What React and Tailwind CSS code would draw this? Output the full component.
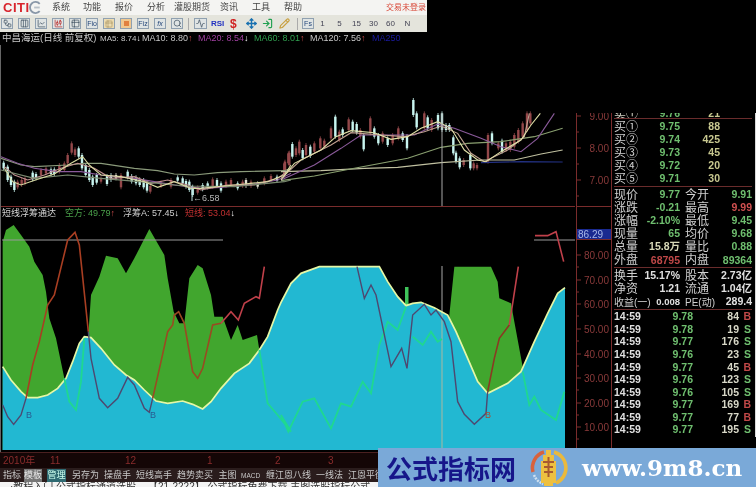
import { ChartCandlestick, ChartLine, Columns3, LogIn, Move, Pencil, Search, Table2, Workflow, Activity } from 'lucide-react';

const up = (pts, dx = 0) => pts.map(([x, y]) => `${dx + x / 3},${100 + y / 3}`).join(' ');
const L = (pts) => pts.map(([x, y]) => [x / 3, 215 + y / 3]);
const R = (pts) => pts.map(([x, y]) => [280 + x / 3, 215 + y / 3]);
const str = (pts) => pts.map((p) => p.join(',')).join(' ');

const candlesLeft = [[8,188,205,'d'],[20,200,240,'d'],[30,230,255,'d'],[40,245,270,'d'],[50,245,262,'u'],[62,240,255,'u'],[72,235,250,'u'],[95,218,238,'d'],[105,222,235,'d'],[120,210,225,'u'],[135,205,220,'u'],[150,208,222,'d'],[160,208,222,'d'],[175,195,215,'u'],[190,190,210,'u'],[200,165,190,'u'],[212,130,158,'u'],[222,148,165,'u'],[233,145,170,'d'],[243,165,205,'d'],[254,195,225,'d'],[265,210,240,'d'],[275,230,255,'d'],[287,225,248,'d'],[300,235,245,'u'],[318,228,252,'d'],[330,225,240,'d'],[345,225,235,'w'],[360,225,262,'u'],[380,215,232,'d'],[392,228,245,'d'],[405,232,250,'d'],[416,238,255,'d'],[428,240,262,'d'],[438,250,272,'d'],[448,258,275,'u'],[480,248,258,'u'],[510,240,260,'u'],[530,232,242,'d'],[545,235,250,'d'],[555,243,260,'d'],[565,245,270,'d'],[575,260,285,'d'],[590,262,278,'u'],[605,255,268,'d'],[620,250,262,'d'],[635,238,260,'u'],[648,240,258,'d'],[660,250,272,'d'],[675,245,258,'u'],[690,240,255,'u'],[710,250,265,'d'],[725,245,258,'u'],[735,240,258,'w'],[750,245,258,'u'],[770,250,260,'w'],[790,235,250,'u'],[810,228,240,'u'],[828,230,242,'d'],[850,190,230,'u'],[865,158,195,'u']];
const candlesRight = [[12,185,215,'u'],[22,160,190,'u'],[34,132,170,'d'],[45,145,165,'u'],[55,125,160,'u'],[65,150,175,'d'],[75,135,165,'u'],[88,140,168,'d'],[100,130,155,'u'],[118,115,145,'u'],[130,122,140,'u'],[150,85,115,'u'],[163,50,110,'d'],[175,95,120,'u'],[185,88,105,'d'],[203,58,90,'u'],[215,65,90,'d'],[227,72,98,'d'],[238,90,110,'u'],[248,105,148,'d'],[268,55,100,'u'],[280,85,110,'d'],[292,105,130,'d'],[305,100,125,'u'],[320,115,135,'d'],[335,105,130,'u'],[352,85,115,'u'],[365,100,120,'d'],[378,108,145,'d'],[397,0,45,'d'],[407,40,82,'d'],[430,40,85,'u'],[440,52,85,'d'],[452,60,90,'u'],[471,45,85,'d'],[483,40,90,'d'],[495,75,90,'d'],[505,75,90,'d'],[517,112,160,'d'],[525,158,185,'d'],[536,175,202,'d'],[548,180,195,'u'],[568,165,205,'d'],[578,190,205,'u'],[588,195,205,'u'],[621,105,185,'u'],[633,100,130,'d'],[652,130,145,'u'],[663,122,155,'d'],[675,130,150,'u'],[688,125,150,'u'],[700,105,140,'u'],[712,90,125,'u'],[725,70,110,'u'],[738,40,90,'u'],[748,40,70,'u']];

const maLeft = [
  ['#8a9a7a', [[0,175],[60,195],[100,200],[200,195],[250,190],[300,190],[400,205],[470,212],[520,222],[580,225],[650,218],[720,215],[850,212],[870,205]]],
  ['#8a5a9a', [[0,170],[50,190],[100,205],[170,215],[240,215],[300,225],[400,235],[460,245],[520,255],[600,265],[660,262],[760,252],[830,240],[870,220]]],
  ['#c09090', [[10,200],[40,225],[80,240],[130,225],[180,205],[230,190],[280,205],[330,235],[400,230],[450,250],[500,240],[560,255],[600,270],[680,255],[760,255],[830,235],[870,205]]],
  ['#7a8a70', [[0,210],[100,235],[200,225],[300,235],[450,248],[550,258],[700,260],[850,245],[870,240]]],
  ['#d8d8a0', [[10,205],[35,245],[60,255],[110,238],[160,222],[210,190],[245,170],[265,195],[300,225],[360,230],[430,245],[470,262],[520,245],[570,265],[600,265],[700,255],[800,245],[850,225],[870,195]]],
];
const maRight = [
  ['#223080', [[600,188],[720,185],[845,186]]],
  ['#c0c0a0', [[0,215],[120,212],[250,205],[350,202],[480,188],[600,180],[700,180],[780,162],[845,150]]],
  ['#8aa070', [[0,242],[100,228],[220,205],[380,175],[480,142],[560,130],[660,125],[760,110],[845,85]]],
  ['#8a5a9a', [[0,240],[100,195],[180,145],[240,105],[320,105],[400,105],[470,72],[520,85],[600,115],[660,140],[720,155],[770,115],[820,40]]],
  ['#c0a090', [[0,235],[60,180],[150,135],[210,98],[300,105],[370,110],[430,95],[480,78],[530,100],[570,160],[610,185],[680,150],[730,110],[745,40]]],
  ['#e0e0a8', [[0,240],[40,190],[120,150],[165,110],[210,92],[280,98],[330,118],[380,110],[420,85],[470,65],[510,85],[550,150],[590,180],[615,185],[660,155],[720,120],[750,75],[778,40]]],
];

const curve = [
  ...L([[5,455],[30,495],[60,530],[80,548],[110,548],[140,540],[170,520],[195,490],[215,440],[235,385],[250,365],[270,368],[300,400],[340,450],[375,480],[400,495],[430,525],[465,558],[500,565],[545,558],[575,568],[605,582],[630,560],[660,520],[700,475],[745,445],[775,405],[800,365],[830,285]]),
  ...R([[0,262],[30,205],[60,175],[115,155],[295,155],[320,200],[350,245],[375,272],[395,265],[420,262],[460,278],[500,300],[525,350],[560,430],[590,500],[620,535],[680,505],[720,470],[760,380],[800,295],[830,235],[852,218]]),
];
const green1 = L([[5,80],[15,45],[38,30],[60,60],[85,95],[100,140],[125,180],[135,230],[145,310],[165,370],[190,490],[190,705],[5,705]]);
const green2 = L([[262,360],[270,240],[295,185],[315,122],[350,130],[375,175],[400,130],[445,42],[490,120],[500,190],[518,290],[535,325],[550,325],[565,190],[590,150],[605,160],[630,240],[640,305],[665,305],[690,375],[710,330],[725,375],[768,360],[775,405],[775,705],[262,705]]);
const green3 = R([[505,300],[520,155],[630,155],[650,200],[655,250],[690,265],[700,320],[725,455],[725,705],[505,705]]);

const brightLines = [
  L([[190,490],[205,560],[225,585],[240,500],[250,370]]),
  [...L([[775,405],[790,500],[800,565],[830,600],[870,650]]), ...R([[0,600],[22,650],[65,560],[100,550],[150,640],[180,565],[210,575],[245,500],[270,535],[295,390],[320,320],[350,345],[375,275]])],
  R([[395,365],[425,390],[450,350],[470,380],[483,372]]),
  R([[725,470],[745,570],[760,545],[780,585],[825,615],[850,530]]),
];
const darkLines = [
  L([[5,570],[20,605],[38,628],[60,600],[75,550]]),
  L([[262,350],[270,430],[295,550],[320,578],[350,550],[380,487],[400,510],[430,580],[445,592],[455,550]]),
  R([[228,155],[250,250],[270,210],[285,240],[330,455],[362,400],[378,460],[395,300],[430,268],[450,300],[465,285],[490,320],[510,380],[530,560],[550,598],[580,628],[615,595],[620,530]]),
];
const redLines = [
  ['#a83e22', L([[75,550],[95,450],[115,380],[140,270],[160,240],[200,75],[222,52],[235,90],[262,350]])],
  ['#9a4a22', L([[455,550],[480,440],[500,350],[515,330],[520,300],[533,290],[550,325],[575,470],[590,490],[605,460],[635,330],[660,325]])],
  ['#c0404a', L([[660,325],[690,290],[712,315],[730,265],[765,245],[775,250],[790,155]])],
  ['#8a3a22', R([[620,530],[640,430],[655,370],[685,330]])],
  ['#c0404a', R([[685,330],[712,155]])],
  ['#c0404a', R([[762,62],[780,62],[800,62],[825,50],[848,140]])],
];

const book = [['买①', '9.75', '88'], ['买②', '9.74', '425'], ['买③', '9.73', '45'], ['买④', '9.72', '20'], ['买⑤', '9.71', '30']];
const stats = [
  ['现价', '9.77', 'text-[#6fbf6f]', '今开', '9.91', 'text-[#6fbf6f]'],
  ['涨跌', '-0.21', 'text-[#6fbf6f]', '最高', '9.99', 'text-[#d05050]'],
  ['涨幅', '-2.10%', 'text-[#6fbf6f]', '最低', '9.45', 'text-[#6fbf6f]'],
  ['现量', '65', 'text-[#6fbf6f]', '均价', '9.68', 'text-[#6fbf6f]'],
  ['总量', '15.8万', 'text-[#d8d8b8]', '量比', '0.88', 'text-[#6fbf6f]'],
  ['外盘', '68795', 'text-[#c04848]', '内盘', '89364', 'text-[#6fbf6f]'],
];
const finance = [['换手', '15.17%', '股本', '2.73亿'], ['净资', '1.21', '流通', '1.04亿'], ['收益(一)', '0.008', 'PE(动)', '289.4']];
const ticks = [['9.78', '84', 'B'], ['9.78', '19', 'S'], ['9.77', '176', 'S'], ['9.76', '23', 'S'], ['9.77', '45', 'B'], ['9.76', '123', 'S'], ['9.76', '105', 'S'], ['9.77', '169', 'B'], ['9.77', '77', 'B'], ['9.77', '195', 'S']];
const tabs = [
  ['指标', 'w-[18px] ml-[3px]'], ['模板', 'w-[18px] ml-[3px] bg-[#777] text-[#e8e8e8]'], ['管理', 'w-[19px] ml-[5px] bg-[#2f6a72] text-[#cfe]'],
  ['另存为', 'w-[26px] ml-[6px]'], ['操盘手', 'w-[26px] ml-[6px]'], ['短线高手', 'w-[35px] ml-[6px]'], ['趋势卖买', 'w-[36px] ml-[6px]'],
  ['主图', 'w-[19px] ml-[5px]'], ['MACD', 'w-[19px] ml-[4px] text-[6.5px]'], ['缠江恩八线', 'w-[44px] ml-[6px]'], ['一线法', 'w-[26px] ml-[6px]'], ['江恩平衡', 'w-[34px] ml-[6px]'],
];

function Candles({ items, dx = 0 }) {
  return items.map(([x, top, bot, kind]) => {
    const cx = dx + x / 3;
    const y1 = 100 + top / 3;
    const y2 = 100 + bot / 3;
    const fill = kind === 'd' ? '#c8f5f0' : kind === 'w' ? '#e0e0d0' : '#94484a';
    return (
      <g key={`${dx}-${x}`}>
        <line x1={cx} x2={cx} y1={y1 - 2} y2={y2 + 2} stroke={fill} strokeWidth="0.8" />
        <rect x={cx - 1.2} y={y1} width="2.4" height={y2 - y1} fill={fill} />
      </g>
    );
  });
}

function ToolBox({ children, size = 'w-[12px]', tone = 'bg-[#dfe4e4] text-[#456]' }) {
  return <span className={`flex items-center justify-center ${size} h-[11px] border border-[#8fa0b0] text-[7px] leading-none ${tone}`}>{children}</span>;
}

function Toolbar() {
  const blue = 'bg-[#dfe4e4] text-[#247]';
  return (
    <div className="flex items-center h-[17px] bg-[#e4e4dc] pl-[1px] text-[#667]">
      <div className="flex items-center gap-[5px]">
        <ToolBox><Workflow size={9} /></ToolBox>
        <ToolBox><Columns3 size={9} /></ToolBox>
        <ToolBox><ChartLine size={9} /></ToolBox>
        <ToolBox tone="bg-[#dfe4e4] text-[#b33]"><ChartCandlestick size={9} /></ToolBox>
        <ToolBox><Table2 size={9} /></ToolBox>
        <ToolBox tone={blue}>Fio</ToolBox>
        <ToolBox tone="bg-[#eedcb0] text-[#a96]"><Table2 size={8} /></ToolBox>
        <ToolBox tone="bg-[#f0c890] text-[#a96]"><span className="w-[5px] h-[5px] bg-[#e08040]" /></ToolBox>
        <ToolBox tone={blue}>Fiz</ToolBox>
        <ToolBox tone={blue}><span className="italic">fx</span></ToolBox>
        <ToolBox><Search size={9} /></ToolBox>
      </div>
      <span className="w-px h-[12px] bg-[#aaa] ml-[5px] mr-[5px]" />
      <ToolBox size="w-[13px]"><Activity size={9} /></ToolBox>
      <span className="ml-[4px] w-[12px] text-[8px] font-bold text-[#2030c0]">RSI</span>
      <span className="ml-[7px] w-[8px] text-[12px] leading-none font-bold text-[#d02020]">$</span>
      <Move size={11} strokeWidth={3} className="ml-[8px] text-[#1870b0]" />
      <LogIn size={11} strokeWidth={2.5} className="ml-[5px] text-[#20a050]" />
      <Pencil size={11} strokeWidth={2.5} className="ml-[6px] text-[#c8a040]" />
      <span className="w-px h-[12px] bg-[#aaa] ml-[7px] mr-[4px]" />
      <ToolBox tone={blue}>Fs</ToolBox>
      <div className="flex items-center text-[8px] text-[#445]">
        <span className="w-[17px] text-center">1</span>
        <span className="w-[17px] text-center">5</span>
        <span className="w-[17px] text-center">15</span>
        <span className="w-[17px] text-center">30</span>
        <span className="w-[17px] text-center">60</span>
        <span className="w-[17px] text-center">N</span>
      </div>
    </div>
  );
}

function UpperChart() {
  return (
    <svg viewBox="0 45 574 161" className="block w-[574px] h-[161px]">
      <Candles items={candlesLeft} />
      <Candles items={candlesRight} dx={280} />
      {maLeft.map(([c, pts]) => <polyline key={c} points={up(pts)} fill="none" stroke={c} strokeWidth="1.1" />)}
      {maRight.map(([c, pts]) => <polyline key={c} points={up(pts, 280)} fill="none" stroke={c} strokeWidth="1.1" />)}
      <line x1="441" x2="441" y1="113" y2="206" stroke="#a8a8a8" strokeWidth="1" />
      <line x1="191" x2="191" y1="186" y2="201" stroke="#b8d8d8" strokeWidth="1" />
      <text x="192" y="201" fill="#b8b8b8" fontSize="9">←6.58</text>
    </svg>
  );
}

function LowerChart() {
  const cyanPoly = [...curve, [564, 450], [1.6, 450]];
  return (
    <svg viewBox="0 220 574 232" className="block w-[574px] h-[232px]">
      <polygon points={str(green1)} fill="#41a62e" />
      <polygon points={str(green2)} fill="#41a62e" />
      <polygon points={str(green3)} fill="#41a62e" />
      <polygon points={str(cyanPoly)} fill="#22b8d2" />
      <rect x="404" y="287" width="3.5" height="19" fill="#3fc45a" />
      <line x1="441" x2="441" y1="266" y2="312" stroke="#a8a8a8" strokeWidth="1" />
      <line x1="441" x2="441" y1="312" y2="450" stroke="#7fb8b0" strokeWidth="1.5" />
      <line x1="1" x2="222" y1="240" y2="240" stroke="#9a9a9a" strokeWidth="1" />
      <line x1="533" x2="575" y1="240" y2="240" stroke="#9a9a9a" strokeWidth="1" />
      <polyline points={str(curve)} fill="none" stroke="#e6f7a6" strokeWidth="1.7" />
      {brightLines.map((pts, i) => <polyline key={i} points={str(pts)} fill="none" stroke="#1fd890" strokeWidth="1.8" />)}
      {darkLines.map((pts, i) => <polyline key={i} points={str(pts)} fill="none" stroke="#4e4870" strokeWidth="1.4" />)}
      {redLines.map(([c, pts], i) => <polyline key={i} points={str(pts)} fill="none" stroke={c} strokeWidth="1.6" />)}
      <text x="25" y="418" fill="#2a5a90" fontSize="9">B</text>
      <text x="149" y="418" fill="#2a5a90" fontSize="9">B</text>
      <text x="484" y="418" fill="#a84a30" fontSize="9">B</text>
    </svg>
  );
}

function Axis() {
  const upper = [[9, 116], [8, 148], [7, 180]];
  const lower = [[80, 255], [70, 280], [60, 304], [50, 329], [40, 354], [30, 378], [20, 403], [10, 427]];
  return (
    <svg viewBox="574 113 37 339" className="block w-[37px] h-[339px]">
      <line x1="575.5" x2="575.5" y1="113" y2="452" stroke="#7a2c2c" />
      <line x1="610.5" x2="610.5" y1="113" y2="452" stroke="#7a2c2c" />
      <line x1="575" x2="611" y1="206.5" y2="206.5" stroke="#7a2c2c" />
      <line x1="575" x2="611" y1="239.5" y2="239.5" stroke="#7a2c2c" />
      {[132, 164, 196].map((y) => <line key={y} x1="575" x2="578" y1={y} y2={y} stroke="#7a2c2c" />)}
      {upper.map(([v, y]) => (
        <g key={v}>
          <line x1="575" x2="580" y1={y} y2={y} stroke="#7a2c2c" />
          <text x="608" y={y + 3.5} textAnchor="end" fill="#8a3a3a" fontSize="10">{v}.00</text>
        </g>
      ))}
      {lower.map(([v, y]) => (
        <g key={v}>
          <line x1="575" x2="580" y1={y} y2={y} stroke="#7a2c2c" />
          <line x1="575" x2="578" y1={y + 12} y2={y + 12} stroke="#7a2c2c" />
          <text x="608" y={y + 3.5} textAnchor="end" fill="#8a3a3a" fontSize="10">{v}.00</text>
        </g>
      ))}
      <rect x="576" y="229" width="34" height="10" fill="#1a2a90" />
      <text x="577" y="237.5" fill="#a8b8e8" fontSize="10">86.29</text>
    </svg>
  );
}

function QuotePanel() {
  return (
    <div className="flex flex-col w-[145px] h-[324px] border-r-2 border-[#d8d8d8] pl-[2px] pr-[3px] text-[10.5px] font-bold text-[#d8d8c8]">
      <div className="h-[6px] overflow-hidden border-b border-[#6a2c2c]">
        <div className="flex items-center h-[13px] -mt-[6px] text-[#cfcfc0]">
          <span className="w-[35px] text-[12px] font-normal">卖①</span>
          <span className="w-[31px] text-right text-[#6fbf6f]">9.76</span>
          <span className="w-[40px] text-right text-[#c8c890]">21</span>
        </div>
      </div>
      <div className="flex flex-col pt-[1px] border-b border-[#6a2c2c]">
        {book.map(([label, price, qty]) => (
          <div key={label} className="flex items-center h-[13.2px]">
            <span className="w-[35px] text-[12px] font-normal text-[#d0d0d0]">{label}</span>
            <span className="w-[31px] text-right text-[#6fbf6f]">{price}</span>
            <span className="w-[40px] text-right text-[#c8c890]">{qty}</span>
          </div>
        ))}
      </div>
      <div className="flex flex-col pt-[1px] border-b border-[#6a2c2c]">
        {stats.map(([a, av, ac, b, bv, bc]) => (
          <div key={a} className="flex items-center h-[13.2px]">
            <span className="w-[30px] text-[12px] font-normal text-[#d0d0d0]">{a}</span>
            <span className={`w-[36px] text-right ${ac}`}>{av}</span>
            <span className="w-[31px] ml-[5px] text-[12px] font-normal text-[#d0d0d0]">{b}</span>
            <span className={`w-[36px] text-right ${bc}`}>{bv}</span>
          </div>
        ))}
      </div>
      <div className="flex flex-col pt-[1px] border-b border-[#6a2c2c]">
        {finance.map(([a, av, b, bv]) => (
          <div key={a} className="flex items-center h-[13.3px]">
            <div className="flex items-center justify-between w-[66px]">
              <span className={`font-normal text-[#d0d0d0] whitespace-nowrap ${a.length > 2 ? 'text-[10px]' : 'text-[12px]'}`}>{a}</span>
              <span className={`text-[#e0e0e0] ${a.length > 2 ? 'text-[9.5px]' : ''}`}>{av}</span>
            </div>
            <div className="flex items-center justify-between w-[67px] ml-[5px]">
              <span className={`font-normal text-[#d0d0d0] whitespace-nowrap ${b.length > 2 ? 'text-[10px]' : 'text-[12px]'}`}>{b}</span>
              <span className="text-[#e0e0e0]">{bv}</span>
            </div>
          </div>
        ))}
      </div>
      <div className="flex flex-col pt-[1px]">
        {ticks.map(([price, vol, side], i) => (
          <div key={i} className="flex items-center h-[12.55px]">
            <span className="w-[30px] text-[#e0e0e0]">14:59</span>
            <span className="w-[49px] text-right text-[#6fbf6f]">{price}</span>
            <span className="w-[46px] text-right text-[#d8d8c8]">{vol}</span>
            <span className={`w-[12px] text-right ${side === 'B' ? 'text-[#c04848]' : 'text-[#6fbf6f]'}`}>{side}</span>
          </div>
        ))}
      </div>
    </div>
  );
}

function BannerLogo() {
  return (
    <svg viewBox="0 0 40 40" className="w-[40px] h-[40px] ml-[11px] shrink-0">
      <path d="M4 24 A16.5 16.5 0 0 1 15 4" fill="none" stroke="#d8623c" strokeWidth="3.5" />
      <path d="M25 4 A16.5 16.5 0 0 1 27 35" fill="none" stroke="#eab93c" strokeWidth="3.5" />
      <path d="M5 27 A16.5 16.5 0 0 0 14 36" fill="none" stroke="#cfe0ef" strokeWidth="2.5" strokeDasharray="2 1" />
      <path d="M17 2 h5 v5 h3 v6 h2 v22 h-3 v3 h-9 v-3 h-3 v-22 h2 v-6 h3 z" fill="#eec040" />
      <path d="M14 14 h11 M15 19 h9 M15 24 h9 M19.5 9 v20" stroke="#a85a30" strokeWidth="2" fill="none" />
    </svg>
  );
}

export default function App() {
  return (
    <div className="relative w-[756px] h-[487px] overflow-hidden bg-black blur-[0.4px] font-['Liberation_Sans','Noto_Sans_CJK_SC',sans-serif]">
      <div className="w-[427px]">
        <div className="flex items-center h-[15px] overflow-hidden bg-[#f4f4f2] text-[9px] text-[#444]">
          <span className="shrink-0 ml-[3px] w-[25px] text-[13px] leading-none font-bold tracking-[0.5px] text-[#d8242c]">CITI</span>
          <svg viewBox="0 0 14 14" className="shrink-0 w-[14px] h-[13px] ml-[1px]">
            <path d="M11 3 A6 6 0 1 0 11 11" fill="none" stroke="#8a98a8" strokeWidth="2" />
            <path d="M5 7 h6" stroke="#b8c0c8" strokeWidth="2" />
          </svg>
          <span className="shrink-0 ml-[9px] w-[31px]">系统</span>
          <span className="shrink-0 w-[32px]">功能</span>
          <span className="shrink-0 w-[32px]">报价</span>
          <span className="shrink-0 w-[27px]">分析</span>
          <span className="shrink-0 w-[46px]">灌股期货</span>
          <span className="shrink-0 w-[32px]">资讯</span>
          <span className="shrink-0 w-[32px]">工具</span>
          <span className="shrink-0 w-[102px]">帮助</span>
          <span className="shrink-0 text-[#d84a3a] whitespace-nowrap text-[8px]">交易未登录</span>
        </div>
        <Toolbar />
      </div>
      <div className="flex items-center h-[13px] pl-[2px] text-[9px] whitespace-nowrap text-[#c8c8c8]">
        <span className="w-[98px] text-[9.5px]">中昌海运(日线 前复权)</span>
        <span className="w-[42px] text-[8px]">MA5: 8.74<span className="text-white">↓</span></span>
        <span className="w-[56px]">MA10: 8.80<span className="text-[#c04848]">↑</span></span>
        <span className="w-[56px] text-[#a040a0]">MA20: 8.54<span className="text-white">↓</span></span>
        <span className="w-[56px] text-[#30a050]">MA60: 8.01<span className="text-[#c04848]">↑</span></span>
        <span className="w-[62px]">MA120: 7.56<span className="text-[#c04848]">↑</span></span>
        <span className="text-[#1a1aa0]">MA250</span>
      </div>

      <div className="flex h-[407px]">
        <div className="w-[575px] border-l border-[#666]">
          <UpperChart />
          <div className="flex items-center h-[14px] border-t border-[#7a2c2c] pl-[1px] text-[9px] whitespace-nowrap">
            <span className="w-[63px] text-[#d8d8d8]">短线浮筹通达</span>
            <span className="w-[58px] text-[#4aa04a]">空方: 49.79<span className="text-[#c04848]">↑</span></span>
            <span className="w-[62px] text-[#d0d0d0]">浮筹A: 57.45<span className="text-white">↓</span></span>
            <span className="text-[#c03030]">短线: 53.04<span className="text-white">↓</span></span>
          </div>
          <LowerChart />
        </div>
        <div className="pt-[68px]">
          <Axis />
        </div>
        <div className="pt-[68px]">
          <QuotePanel />
        </div>
      </div>

      <div className="flex items-center h-[16px] bg-[#140606] border-t border-[#4a2020] text-[10px] text-[#8a2c2c]">
        <span className="ml-[3px] w-[47px]">2010年</span>
        <span className="w-[75px]">11</span>
        <span className="w-[82px]">12</span>
        <span className="w-[68px]">1</span>
        <span className="w-[53px]">2</span>
        <span>3</span>
      </div>
      <div className="flex items-center h-[14px] bg-[#2a1c1c] text-[9px] text-[#c8c8c8] whitespace-nowrap overflow-hidden">
        {tabs.map(([name, cls]) => (
          <span key={name} className={`shrink-0 text-center leading-[13px] ${cls}`}>{name}</span>
        ))}
      </div>
      <div className="flex h-[5px] bg-[#f4f4f4] overflow-hidden text-[10px] leading-[10px] text-[#333] whitespace-nowrap">
        <span className="ml-[10px] w-[138px]">·教程入门 公式指标通道选股</span>
        <span>【21-2222】 公式指标免费下载 主图选股指标公式</span>
      </div>

      <div className="absolute left-[378px] top-[448px] flex items-center w-[378px] h-[39px] bg-[#7aa9d8]">
        <span className="ml-[8px] w-[132px] text-[26px] leading-none font-bold text-[#16168a] font-['Noto_Sans_CJK_SC',sans-serif] whitespace-nowrap">公式指标网</span>
        <BannerLogo />
        <span className="ml-[13px] text-[23px] leading-none font-bold text-white font-['DejaVu_Serif',serif] whitespace-nowrap">www.9m8.cn</span>
      </div>
    </div>
  );
}
